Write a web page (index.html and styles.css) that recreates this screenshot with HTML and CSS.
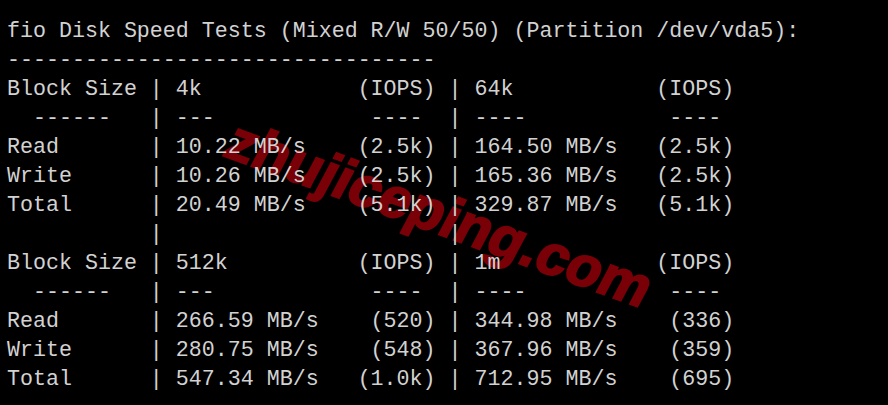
FILE: index.html
```html
<!DOCTYPE html>
<html>
<head>
<meta charset="utf-8">
<link rel="stylesheet" href="styles.css">
</head>
<body>
<div class="term">
<div class="watermark">zhujiceping.com</div>
<pre class="out">fio Disk Speed Tests (Mixed R/W 50/50) (Partition /dev/vda5):
---------------------------------
Block Size | 4k            (IOPS) | 64k           (IOPS)
  ------   | ---            ----  | ----           ---- 
Read       | 10.22 MB/s    (2.5k) | 164.50 MB/s   (2.5k)
Write      | 10.26 MB/s    (2.5k) | 165.36 MB/s   (2.5k)
Total      | 20.49 MB/s    (5.1k) | 329.87 MB/s   (5.1k)
           |                      |
Block Size | 512k          (IOPS) | 1m            (IOPS)
  ------   | ---            ----  | ----           ---- 
Read       | 266.59 MB/s    (520) | 344.98 MB/s    (336)
Write      | 280.75 MB/s    (548) | 367.96 MB/s    (359)
Total      | 547.34 MB/s   (1.0k) | 712.95 MB/s    (695)</pre>
</div>
</body>
</html>
```
FILE: styles.css
```css
html, body {
  margin: 0;
  padding: 0;
  background: #000;
}
.term {
  position: relative;
  width: 888px;
  height: 405px;
  overflow: hidden;
  background: #000;
  padding: 17px 0 0 7px;
  box-sizing: border-box;
}
.out {
  position: relative;
  z-index: 1;
  margin: 0;
  font-family: "Liberation Mono", monospace;
  font-size: 21.65px;
  line-height: 29px;
  color: #d2d2d2;
  white-space: pre;
}
.watermark {
  position: absolute;
  left: 440px;
  top: 214px;
  transform: translate(-50%, -50%) rotate(20deg) skewX(-8deg);
  font-family: "Liberation Sans", Arial, sans-serif;
  font-weight: bold;
  font-size: 57px;
  line-height: 1;
  color: #7a0008;
  -webkit-text-stroke: 2px #7a0008;
  white-space: nowrap;
  z-index: 0;
}
```
